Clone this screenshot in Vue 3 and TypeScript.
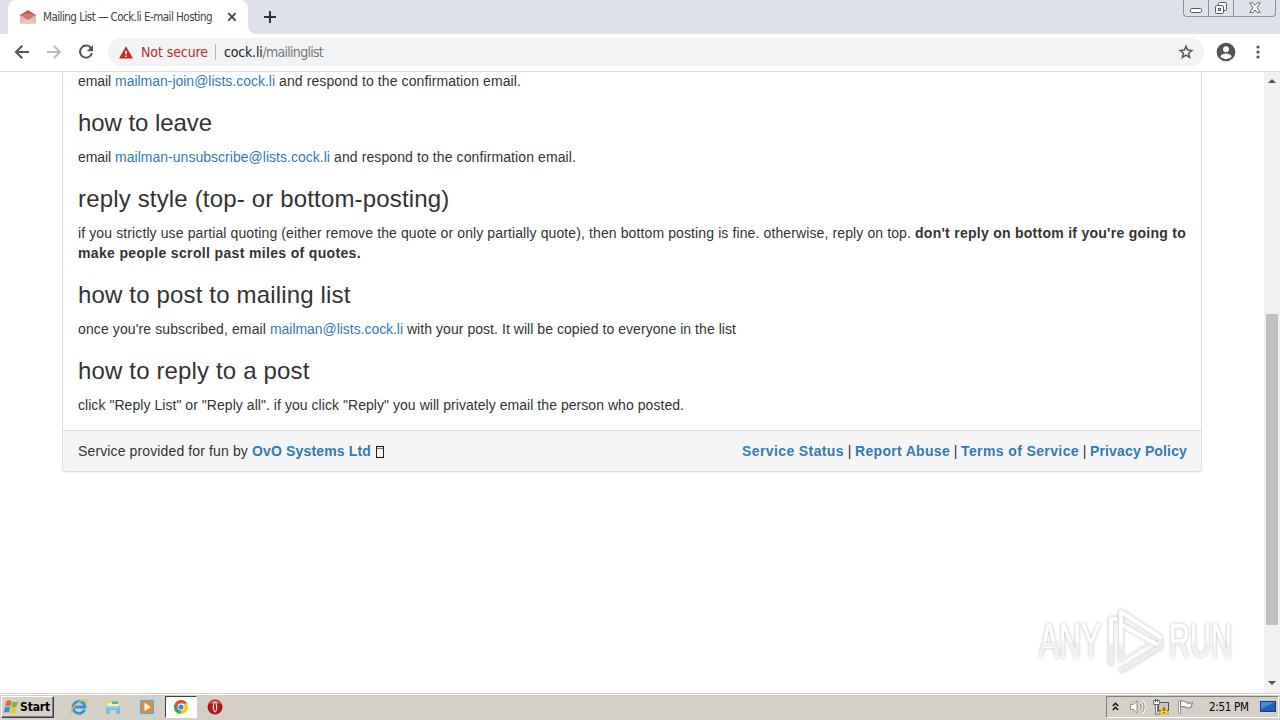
<script setup lang="ts">
import { nextTick, type Directive } from 'vue'

type Run = { text: string; width: number; kind?: 'link' | 'bold' }
type Block = { heading: boolean; lines: Run[][] }

// Tracks a run of text so that it fills the given advance width.
const vFit: Directive<HTMLElement, number> = {
  mounted(el, { value }) {
    nextTick(() => {
      const natural = el.getBoundingClientRect().width
      const count = (el.textContent ?? '').length
      if (count) el.style.letterSpacing = `${(value - natural) / count}px`
    })
  },
}

const heading = (text: string, width: number): Block => ({ heading: true, lines: [[{ text, width }]] })
const para = (...lines: Run[][]): Block => ({ heading: false, lines })

const blocks: Block[] = [
  para([
    { text: 'email ', width: 37 },
    { text: 'mailman-join@lists.cock.li', width: 160, kind: 'link' },
    { text: ' and respond to the confirmation email.', width: 246 },
  ]),
  heading('how to leave', 134),
  para([
    { text: 'email ', width: 37 },
    { text: 'mailman-unsubscribe@lists.cock.li', width: 215, kind: 'link' },
    { text: ' and respond to the confirmation email.', width: 246 },
  ]),
  heading('reply style (top- or bottom-posting)', 371.5),
  para(
    [
      { text: 'if you strictly use partial quoting (either remove the quote or only partially quote), then bottom posting is fine. otherwise, reply on top. ', width: 837 },
      { text: "don't reply on bottom if you're going to", width: 271, kind: 'bold' },
    ],
    [{ text: 'make people scroll past miles of quotes.', width: 283, kind: 'bold' }],
  ),
  heading('how to post to mailing list', 272.5),
  para([
    { text: "once you're subscribed, email ", width: 192 },
    { text: 'mailman@lists.cock.li', width: 133, kind: 'link' },
    { text: ' with your post. It will be copied to everyone in the list', width: 333 },
  ]),
  heading('how to reply to a post', 231.5),
  para([{ text: 'click "Reply List" or "Reply all". if you click "Reply" you will privately email the person who posted.', width: 606 }]),
]

const footerLinks = [
  { text: 'Service Status', width: 102 },
  { text: 'Report Abuse', width: 95 },
  { text: 'Terms of Service', width: 118 },
  { text: 'Privacy Policy', width: 97 },
]
</script>

<template>
  <div class="screen">
    <header class="tabstrip">
      <div class="tab">
        <svg class="favicon" width="16" height="16" viewBox="0 0 16 16">
          <path d="M0 6 8 1l8 5v9H0z" fill="#b9605f" />
          <path d="M2 5h12v5H2z" fill="#cf7673" />
          <path d="M0 6l8 5 8-5v9H0z" fill="#e9b5b1" />
          <path d="M0 15l6-5 2 1.2L10 10l6 5z" fill="#f0c9c5" />
        </svg>
        <span v-fit="169" class="tab-title">Mailing List — Cock.li E-mail Hosting</span>
        <svg class="tab-close" width="10" height="10" viewBox="0 0 10 10"><path d="M1.2 1.2l7.4 7.4M8.6 1.2L1.2 8.6" stroke="#3c4043" stroke-width="1.7" /></svg>
      </div>
      <svg class="tab-curve" width="8" height="8" viewBox="0 0 8 8"><path d="M0 0a8 8 0 0 0 8 8H0z" fill="#fff" /></svg>
      <svg class="new-tab" width="14" height="14" viewBox="0 0 14 14"><path d="M7 1v12M1 7h12" stroke="#303338" stroke-width="2" /></svg>
      <div class="win-buttons">
        <span class="win-btn"><svg width="14" height="15" viewBox="0 0 14 15"><rect x="1.5" y="8.5" width="11" height="4" rx="1.2" fill="#fff" stroke="#555b66" /></svg></span>
        <span class="win-btn"><svg width="14" height="15" viewBox="0 0 14 15"><g fill="#fff" stroke="#555b66"><rect x="4.5" y="2.5" width="8" height="8" rx="1.2" /><rect x="1.5" y="5.5" width="8" height="8" rx="1.2" /><rect x="4.5" y="8.5" width="2" height="2" /></g></svg></span>
        <span class="win-btn wide"><svg width="14" height="15" viewBox="0 0 14 15"><path d="M1.8 2.8h3L7 5.4l2.2-2.6h3L9 7.8l3.2 4.7h-3L7 10l-2.2 2.5h-3L5 7.8z" fill="#fff" stroke="#656b76" /></svg></span>
      </div>
    </header>

    <div class="toolbar">
      <svg width="16" height="16" viewBox="0 0 16 16"><path d="M15 8H2.2M8.2 1.8 2 8l6.2 6.2" fill="none" stroke="#54575b" stroke-width="2" /></svg>
      <svg class="forward" width="16" height="16" viewBox="0 0 16 16"><path d="M1 8h12.8M7.8 1.8 14 8l-6.2 6.2" fill="none" stroke="#b8babd" stroke-width="2" /></svg>
      <svg class="reload" width="16" height="16" viewBox="0 0 16 16"><path d="M13 4.2A6 6 0 1 0 13.9 9" fill="none" stroke="#54575b" stroke-width="2" /><path d="M15 1v6.2H8.8z" fill="#54575b" /></svg>
      <div class="omnibox">
        <svg class="warn" width="14" height="13" viewBox="0 0 14 13"><path d="M7 .3 14 12.6H0z" fill="#c5282a" /><path d="M6.2 4.7h1.6v3.6H6.2zM6.2 9.4h1.6V11H6.2z" fill="#fff" /></svg>
        <span v-fit="67" class="not-secure">Not secure</span>
        <i class="omni-sep"></i>
        <span class="url"><span v-fit="38.5" class="host">cock.li</span><span v-fit="60.5">/mailinglist</span></span>
        <svg class="star" width="16" height="16" viewBox="0 0 16 16"><path d="M8 2.200l1.600 3.900 4.200.4-3.200 2.700 1 4.100L8 11.100l-3.600 2.200 1-4.100-3.200-2.700 4.200-.4z" fill="none" stroke="#54575b" stroke-width="1.500" /></svg>
      </div>
      <svg class="avatar" width="20" height="20" viewBox="0 0 20 20"><circle cx="10" cy="10" r="9.3" fill="#505357" /><circle cx="10" cy="7.2" r="3" fill="#fff" /><path d="M4.3 14.2c1.2-2 3.6-2.8 5.7-2.8s4.5.8 5.7 2.8a7 7 0 0 1-11.4 0z" fill="#fff" /></svg>
      <svg class="dots" width="4" height="14" viewBox="0 0 4 14"><g fill="#54575b"><circle cx="2" cy="2" r="1.6" /><circle cx="2" cy="7" r="1.6" /><circle cx="2" cy="12" r="1.6" /></g></svg>
    </div>

    <div class="viewport">
      <main class="page">
        <section class="panel">
          <div class="panel-body">
            <component :is="b.heading ? 'h3' : 'p'" v-for="(b, i) in blocks" :key="i" :class="b.heading ? 'title' : 'copy'">
              <span v-for="(line, j) in b.lines" :key="j" class="line"><span v-for="(run, k) in line" :key="k" v-fit="run.width" class="run" :class="run.kind">{{ run.text }}</span></span>
            </component>
          </div>
          <footer class="panel-footer">
            <span class="line"><span v-fit="174" class="run">Service provided for fun by </span><span v-fit="119" class="run link bold">OvO Systems Ltd</span><i class="missing"></i></span>
            <span class="line">
              <template v-for="(l, i) in footerLinks" :key="l.text"><span v-if="i" class="bar">|</span><span v-fit="l.width" class="run link bold">{{ l.text }}</span></template>
            </span>
          </footer>
        </section>
      </main>
      <aside class="scrollbar">
        <svg class="arrow" width="8" height="4" viewBox="0 0 8 4"><path d="M0 4l4-4 4 4z" fill="#505050" /></svg>
        <div class="track"><div class="thumb"></div></div>
        <svg class="arrow" width="8" height="4" viewBox="0 0 8 4"><path d="M0 0l4 4 4-4z" fill="#505050" /></svg>
      </aside>
      <svg class="watermark" width="220" height="74" viewBox="0 0 220 74">
        <defs>
          <linearGradient id="word-fill" x1="0" y1="0" x2="0" y2="1">
            <stop offset=".5" stop-color="#fff" />
            <stop offset=".55" stop-color="#efefef" />
          </linearGradient>
        </defs>
        <g class="mark-shadow" fill="none" stroke="#d4d4d4" stroke-linejoin="round" stroke-linecap="round">
          <path d="M81 58V14h5M91 54V7l39 25M93 20l33 19M92 65l38-23v-6" stroke-width="6" />
        </g>
        <g class="mark-word">
          <text x="9" y="52" textLength="62" lengthAdjust="spacingAndGlyphs">ANY</text>
          <text x="139" y="52" textLength="63" lengthAdjust="spacingAndGlyphs">RUN</text>
        </g>
        <g fill="none" stroke-width="4" stroke-linejoin="round" stroke-linecap="round">
          <path d="M81 58V37M91 55V37M92 65l38-23v-7M92 55l26-16" stroke="#ededed" />
          <path d="M81 37V14h5M91 38V7l39 25M92 20l34 19" stroke="#fff" />
        </g>
      </svg>
    </div>

    <footer class="taskbar">
      <button class="start">
        <svg width="16" height="16" viewBox="0 0 15 15"><path d="M3 2q2.5-1.5 5 0L7 7Q4.500 5.500 2 7z" fill="#e46a2c" /><path d="M9 2.300q2.500 1.300 5-.3l-1.300 5Q10.300 8.500 8 7.300z" fill="#79b540" /><path d="M1.800 8q2.500-1.500 5 0L5.500 13Q3 11.500.5 13z" fill="#3d8fd1" /><path d="M7.800 8.300q2.500 1.300 4.700-.2l-1.300 5Q9 14.300 6.500 13z" fill="#f4c430" /></svg>
        <span v-fit="30">Start</span>
      </button>
      <div class="quick">
        <svg width="18" height="18" viewBox="0 0 18 18"><path d="M14.500 11.800A6 6 0 1 1 15 9H4" fill="none" stroke="#2d95d8" stroke-width="2.800" /><path d="M5.500 7.200a4 4 0 0 1 7 0" fill="none" stroke="#8bd0f4" stroke-width="1" /><path d="M1.500 15.800C-.5 12 8 3 14.500 1.600c3-.3 2 2.600 1.500 3.400" fill="none" stroke="#e7b93b" stroke-width="1.300" /></svg>
        <svg width="18" height="18" viewBox="0 0 18 18"><path d="M2 3h5l1 1.500h8V11H2z" fill="#e9ce6d" /><path d="M3 5h12v4H3z" fill="#f8edb3" /><path d="M8 3.500h6V6H8z" fill="#67b36d" /><path d="M2 8h14v8h-4v-4H6v4H2z" fill="#75bde2" /><path d="M3 9h12" stroke="#bfe4f5" /></svg>
        <svg width="18" height="18" viewBox="0 0 18 18"><rect x="1.500" y="1.500" width="15" height="15" fill="#6ba5d3" stroke="#b2d5ed" /><rect x="3.500" y="3.500" width="11" height="11" rx="1" fill="#f18a1d" /><path d="M6.500 4.800 12.800 9l-6.300 4.200z" fill="#fff" /></svg>
        <span class="active-app">
          <svg width="16" height="16" viewBox="0 0 16 16"><circle cx="8" cy="8" r="7" fill="#f6c62c" /><path d="M1.900 4.500A7 7 0 0 1 14.100 4.600H8L5 9.700z" fill="#df4937" /><path d="M1.900 4.500 5 9.800 8.300 11.200 7.200 15A7 7 0 0 1 1.900 4.500z" fill="#35a55a" /><circle cx="8" cy="8" r="3.400" fill="#fff" /><circle cx="8" cy="8" r="2.600" fill="#4484e8" /></svg>
        </span>
        <svg class="opera" width="18" height="18" viewBox="0 0 18 18"><circle cx="9" cy="9" r="7.500" fill="#b81319" /><path d="M3.200 6a6.500 6.500 0 0 1 11.600 0q-6-2-11.600 0z" fill="#dc6a66" /><ellipse cx="9" cy="9" rx="2.300" ry="5.400" fill="#f7e8e8" /><ellipse cx="9" cy="9" rx=".9" ry="4.300" fill="#991015" /></svg>
      </div>
      <div class="tray">
        <svg class="chev" width="7" height="9" viewBox="0 0 7 9"><path d="M.8 4l2.700-2.700L6.200 4M.8 8l2.700-2.700L6.200 8" fill="none" stroke="#111" stroke-width="1.400" /></svg>
        <svg class="speaker" width="17" height="16" viewBox="0 0 17 16"><path d="M1.500 5.500h2.800L8 1.800v12.400L4.300 10.500H1.500z" fill="#fff" stroke="#8a8a88" /><path d="M10.500 5q2 3 0 6M12.500 3.200q3.500 4.800 0 9.600M14.300 1.500q4 6.500 0 13" fill="none" stroke="#f6f6f3" stroke-width="1.200" /><path d="M11.200 5q2 3 0 6M13.400 3.200q3.300 4.800 0 9.600" fill="none" stroke="#85858a" stroke-width="1" /></svg>
        <svg class="net" width="17" height="16" viewBox="0 0 17 16"><rect x="5.500" y="3.500" width="10" height="8" fill="#c9c9c5" stroke="#555" /><path d="M3.500 5v9h4" fill="none" stroke="#777" stroke-width="3" /><path d="M3.500 5v9h4" fill="none" stroke="#fff" stroke-width="1" /><path d="M.6 1.500h5.800v4H.6z" fill="#fff" stroke="#666" /><path d="M2.500 0v3M4.500 0v3" stroke="#666" /><path d="M11 6.500 16 15H6z" fill="#ffd21f" stroke="#c99d10" stroke-width=".7" /><path d="M11 9v3M11 13v1" stroke="#222" stroke-width="1.200" /></svg>
        <svg class="flag" width="17" height="16" viewBox="0 0 17 16"><path d="M1.500 1.500h2v13h-2z" fill="#fff" stroke="#85827b" stroke-width=".8" /><path d="M3.500 2.500q3-1.500 5.500.5h1v1q3 .8 5.500-.5l-1.500 5q-2.500 1-5 0V8q-3-1-5.500 0z" fill="#fff" stroke="#77746d" /></svg>
        <span v-fit="39.5" class="clock">2:51 PM</span>
        <svg class="desktop" width="16" height="14" viewBox="0 0 16 14"><rect x=".5" y="1.500" width="15" height="10" fill="#2260b4" stroke="#153f7d" /><path d="M1 2h14L1 9z" fill="#4c8bd4" /><path d="M3 12h9v1.500H3z" fill="#cad9ec" /></svg>
      </div>
    </footer>
  </div>
</template>

<style>
html,
body {
  margin: 0;
  overflow: hidden;
}
</style>

<style scoped>
.screen {
  width: 1280px;
  height: 720px;
  display: flex;
  flex-direction: column;
  overflow: hidden;
  background: #fff;
  color: #333;
  font-family: "Liberation Sans", Arial, sans-serif;
}
svg { display: block; flex: none; }
.tabstrip {
  height: 34px;
  flex: none;
  display: flex;
  background: #dee1e7;
  font-family: "DejaVu Sans Condensed", "DejaVu Sans", sans-serif;
}
.tab {
  width: 240px;
  height: 34px;
  margin-left: 8px;
  display: flex;
  align-items: center;
  background: #fff;
  border-radius: 8px 8px 0 0;
  box-sizing: border-box;
  padding-left: 12px;
}
.tab-title { margin-left: 7px; font-size: 11.5px; color: #3c4043; white-space: pre; }
.tab-close { margin-left: 15px; }
.tab-curve { align-self: flex-end; }
.new-tab { margin: 10px 0 0 7px; }
.win-buttons {
  display: flex;
  height: 16px;
  margin: 0 4px 0 auto;
  border: 1px solid #8d929b;
  border-top: 0;
  border-radius: 0 0 4px 4px;
}
.win-btn { width: 24px; display: flex; justify-content: center; border-right: 1px solid #8d929b; }
.win-btn.wide { width: 41px; border-right: 0; }
.toolbar {
  height: 36px;
  flex: none;
  display: flex;
  align-items: center;
  padding: 0 0 1px 14px;
  border-bottom: 1px solid #dcdcdc;
  font-family: "DejaVu Sans Condensed", "DejaVu Sans", sans-serif;
}
.forward { margin-left: 16px; }
.reload { margin-left: 16px; }
.omnibox {
  width: 1096px;
  height: 28px;
  margin-left: 14px;
  display: flex;
  align-items: center;
  box-sizing: border-box;
  padding: 0 10px 0 11px;
  border-radius: 14px;
  background: #f1f3f4;
  font-size: 14px;
  white-space: pre;
}
.not-secure { margin-left: 8px; color: #c5282a; }
.omni-sep { width: 1px; height: 16px; margin: 0 8px 0 7px; background: #b3b5b8; }
.url { color: #74777b; }
.host { color: #202124; }
.star { margin-left: auto; }
.avatar { margin-left: 12px; }
.dots { margin-left: 20px; }
.viewport { position: relative; height: 621px; flex: none; display: flex; overflow: hidden; }
.page { flex: 1; padding-left: 62px; }
.panel {
  width: 1140px;
  box-sizing: border-box;
  border: 1px solid #ddd;
  border-top: 0;
  border-radius: 0 0 4px 4px;
  box-shadow: 0 1px 1px rgba(0, 0, 0, 0.05);
}
.panel-body { padding: 0 15px 5px; }
.copy { margin: 0 0 10px; font-size: 14px; line-height: 20px; }
.copy:first-child { margin-top: -1px; }
.title { margin: 19px 0 11px; font-size: 24px; line-height: 26px; font-weight: 400; }
.line { display: flex; white-space: pre; }
.run { flex: none; }
.link { color: #337ab7; }
.bold { font-weight: 700; }
.panel-footer {
  height: 40px;
  display: flex;
  align-items: center;
  justify-content: space-between;
  padding: 0 14px 0 15px;
  background: #f5f5f5;
  border-top: 1px solid #ddd;
  border-radius: 0 0 3px 3px;
  font-size: 14px;
  line-height: 20px;
}
.bar { width: 11px; text-align: center; }
.missing {
  width: 6px;
  height: 10px;
  margin: 5px 0 0 5px;
  border: 1px solid #222;
  box-shadow: inset 0 1px #f5f5f5, inset 0 2px #777;
}
.scrollbar {
  width: 16px;
  display: flex;
  flex-direction: column;
  align-items: center;
  box-sizing: border-box;
  padding: 7px 0 8px;
  background: #f1f1f1;
}
.track { flex: 1; width: 12px; }
.thumb { height: 311px; margin-top: 231px; background: #c1c1c1; }
.watermark { position: absolute; left: 1030px; top: 533px; overflow: visible; }
.mark-shadow { filter: blur(1.5px); }
.mark-word {
  font: 400 48px "Liberation Sans", Arial, sans-serif;
  fill: url(#word-fill);
  stroke: #fff;
  stroke-width: 0.8px;
  filter: drop-shadow(0 0 1.5px #b8b8b8);
}
.taskbar {
  height: 28px;
  flex: none;
  display: flex;
  align-items: center;
  box-sizing: border-box;
  border-top: 1px solid #d4d0c8;
  box-shadow: inset 0 1px #fff;
  background: #d4d0c8;
  font-family: "DejaVu Sans Condensed", "DejaVu Sans", sans-serif;
}
.start {
  width: 53px;
  height: 22px;
  margin: 0 0 1px 1px;
  padding: 0 0 0 1px;
  display: flex;
  align-items: center;
  gap: 1px;
  border: 1px solid;
  border-color: #fff #404040 #404040 #fff;
  box-shadow: inset -1px -1px #808080;
  background: #d4d0c8;
  color: #000;
  font: 700 12px "DejaVu Sans Condensed", "DejaVu Sans", sans-serif;
}
.quick { display: flex; align-items: center; margin: 0 0 1px 16px; gap: 16px; }
.active-app {
  width: 32px;
  height: 22px;
  margin-left: -7px;
  display: flex;
  align-items: center;
  justify-content: center;
  box-sizing: border-box;
  border: 1px solid;
  border-color: #404040 #fff #fff #404040;
  background: #fff;
}
.opera { margin-left: -7px; }
.tray {
  width: 173px;
  height: 22px;
  margin: 0 1px 1px auto;
  display: flex;
  align-items: center;
  box-sizing: border-box;
  border: 1px solid;
  border-color: #808080 #fff #fff #808080;
}
.chev { margin: 0 0 2px 5px; }
.speaker { margin-left: 10px; }
.net { margin-left: 7px; }
.flag { margin-left: 7px; }
.clock { margin-left: 15px; font-size: 11.5px; color: #000; white-space: pre; }
.desktop { margin-left: 11px; }
</style>
